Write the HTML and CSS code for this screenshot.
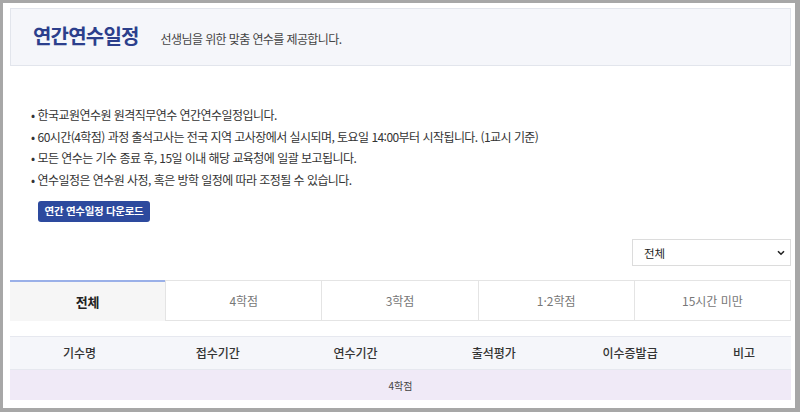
FILE: index.html
```html
<!DOCTYPE html>
<html lang="ko">
<head>
<meta charset="utf-8">
<title>연간연수일정</title>
<link rel="stylesheet" href="styles.css">
</head>
<body>
<div class="frame">
  <header class="page-head">
    <h1 class="page-title">연간연수일정</h1>
    <p class="page-sub">선생님을 위한 맞춤 연수를 제공합니다.</p>
  </header>

  <ul class="notice">
    <li>한국교원연수원 원격직무연수 연간연수일정입니다.</li>
    <li>60시간(4학점) 과정 출석고사는 전국 지역 고사장에서 실시되며, 토요일 14:00부터 시작됩니다. (1교시 기준)</li>
    <li>모든 연수는 기수 종료 후, 15일 이내 해당 교육청에 일괄 보고됩니다.</li>
    <li>연수일정은 연수원 사정, 혹은 방학 일정에 따라 조정될 수 있습니다.</li>
  </ul>
  <div class="btn-row"><a class="btn" href="#">연간 연수일정 다운로드</a></div>

  <div class="filter-row">
    <div class="select-wrap">
      <select class="select">
        <option>전체</option>
        <option>4학점</option>
        <option>3학점</option>
      </select>
      <svg class="chev" width="8" height="6" viewBox="0 0 8 6"><path d="M1 1.2 L4 4.2 L7 1.2" fill="none" stroke="#222" stroke-width="1.6"/></svg>
    </div>
  </div>

  <nav class="tabs">
    <a class="tab active" href="#">전체</a>
    <a class="tab" href="#">4학점</a>
    <a class="tab" href="#">3학점</a>
    <a class="tab" href="#">1·2학점</a>
    <a class="tab" href="#">15시간 미만</a>
  </nav>

  <table class="sched">
    <colgroup>
      <col style="width:17.8%"><col style="width:17.6%"><col style="width:17.7%"><col style="width:17.7%"><col style="width:17.2%"><col>
    </colgroup>
    <thead>
      <tr><th>기수명</th><th>접수기간</th><th>연수기간</th><th>출석평가</th><th>이수증발급</th><th>비고</th></tr>
    </thead>
    <tbody>
      <tr class="group"><td colspan="6">4학점</td></tr>
    </tbody>
  </table>
</div>
</body>
</html>
```

FILE: styles.css
```css
* { box-sizing: border-box; }
html, body { margin: 0; padding: 0; }
body {
  background: #a7a7a7;
  font-family: "Noto Sans CJK KR", "Noto Sans", sans-serif;
  color: #333;
  width: 800px;
  height: 412px;
  overflow: hidden;
}
.frame {
  margin: 3px 5px 4px 3px;
  height: 405px;
  background: #fff;
  padding: 5px 4px 0 7px;
}
.page-head {
  height: 58px;
  background: #f5f6fa;
  border: 1px solid #e2e5ec;
  display: flex;
  align-items: baseline;
  padding: 12px 0 0 22px;
}
.page-title {
  margin: 0;
  font-size: 20px;
  font-weight: 700;
  color: #2c3f8c;
  letter-spacing: -0.8px;
}
.page-sub {
  margin: 0 0 0 22px;
  font-size: 12px;
  color: #444;
  letter-spacing: -0.6px;
}
.notice {
  list-style: none;
  margin: 0;
  padding: 38px 0 0 21px;
  font-size: 12px;
  line-height: 21.7px;
  color: #333;
  letter-spacing: -0.55px;
}
.notice li::before {
  content: "•";
  margin-right: 3px;
}
.btn-row { padding: 5px 0 0 28px; }
.btn {
  display: inline-block;
  width: 112px;
  height: 21px;
  line-height: 20px;
  text-align: center;
  background: #2d4a9e;
  color: #fff;
  font-size: 10.5px;
  font-weight: 700;
  text-decoration: none;
  border-radius: 3px;
  letter-spacing: -0.3px;
}
.filter-row {
  display: flex;
  justify-content: flex-end;
  padding-top: 17px;
}
.select-wrap { position: relative; width: 159px; height: 27px; }
.select {
  appearance: none;
  -webkit-appearance: none;
  width: 100%;
  height: 100%;
  border: 1px solid #dcdcdc;
  background: #fff;
  font-family: inherit;
  font-size: 11.5px;
  color: #222;
  padding: 0 0 0 11px;
  border-radius: 0;
}
.chev { position: absolute; right: 6px; top: 11px; pointer-events: none; }
.tabs {
  display: flex;
  margin-top: 14px;
  height: 41px;
}
.tab {
  flex: 1;
  display: flex;
  align-items: center;
  justify-content: center;
  border: 1px solid #e4e4e4;
  border-left: none;
  font-size: 12px;
  color: #777;
  text-decoration: none;
  background: #fff;
}
.tab.active {
  background: #f6f6f6;
  border: none;
  border-top: 2px solid #9ab0e8;
  color: #222;
  font-weight: 700;
  font-size: 13px;
}
.tab.active + .tab { border-left: 1px solid #e4e4e4; }
.sched {
  width: 100%;
  margin-top: 15px;
  border-collapse: collapse;
  table-layout: fixed;
}
.sched th {
  height: 33px;
  background: #f5f6fa;
  border-top: 1px solid #e6e8ef;
  border-bottom: 1px solid #e6e8ef;
  font-weight: 500;
  font-size: 12px;
  color: #333;
  padding: 0;
}
.sched .group td {
  height: 31px;
  background: #f0eaf7;
  text-align: center;
  font-size: 10px;
  color: #444;
  padding: 0;
}
```
